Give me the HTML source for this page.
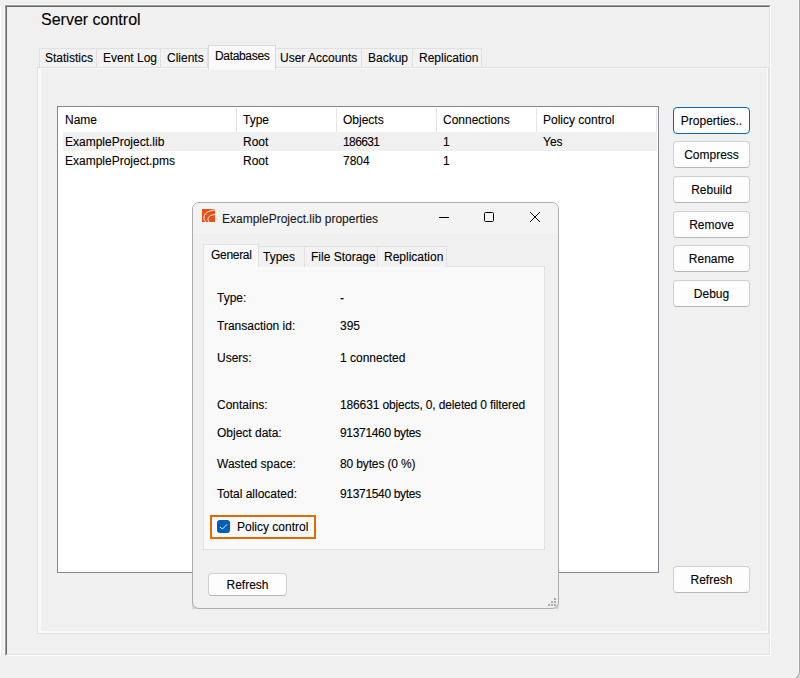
<!DOCTYPE html>
<html><head><meta charset="utf-8">
<style>
*{box-sizing:border-box;margin:0;padding:0}
html,body{width:800px;height:678px;overflow:hidden;background:#f0f0f0}
body{position:relative;font-family:"Liberation Sans",sans-serif;color:#000;-webkit-text-stroke:0.1px #000}
.a{position:absolute}
.t{position:absolute;font-size:12px;line-height:12px;white-space:nowrap;color:#000}
.tab{position:absolute;top:48px;height:19px;background:#f2f2f2;border:1px solid #e0e0e0;border-bottom:none}
.btn{position:absolute;left:673px;width:77px;height:27px;background:#fdfdfd;border:1px solid #d0d0d0;border-bottom-color:#b8b8b8;border-radius:4px}
.btn span{position:absolute;left:0;right:0;top:7px;text-align:center;font-size:12px;line-height:12px;white-space:nowrap}
.sep{position:absolute;top:108px;width:1px;height:24px;background:#e5e5e5}
.dtab{position:absolute;top:246px;height:21px;background:#f2f2f2;border:1px solid #e2e2e2;border-bottom:none}
</style></head><body>
<!-- right edge -->
<div class="a" style="left:798px;top:0;width:1px;height:668px;background:#f9f9f9"></div>
<div class="a" style="left:799px;top:0;width:1px;height:668px;background:#a4a4a4"></div>
<div class="a" style="left:788px;top:666px;width:12px;height:12px;background:#d4d4d4"></div>
<div class="a" style="left:770px;top:640px;width:30px;height:40px;background:#f0f0f0;border-right:1px solid #a4a4a4;border-bottom:1px solid #a4a4a4;border-bottom-right-radius:9px;box-shadow:inset -1px -1px 0 #f9f9f9"></div>
<!-- left white line -->
<div class="a" style="left:0;top:5px;width:1px;height:651px;background:#fff"></div>
<div class="a" style="left:4px;top:4px;width:767px;height:1px;background:#f7f7f7"></div>
<div class="a" style="left:4px;top:4px;width:1px;height:652px;background:#f7f7f7"></div>
<!-- sunken frame -->
<div class="a" style="left:5px;top:5px;width:766px;height:651px;border-top:1px solid #a0a0a0;border-left:1px solid #a0a0a0;border-right:1px solid #fff;border-bottom:1px solid #fff"></div>
<div class="a" style="left:6px;top:6px;width:764px;height:649px;border-top:1px solid #696969;border-left:1px solid #696969;border-right:1px solid #e3e3e3;border-bottom:1px solid #e3e3e3"></div>

<div class="a" style="left:41px;top:12px;font-size:16px;line-height:16px;white-space:nowrap">Server control</div>

<!-- tab panel -->
<div class="a" style="left:37px;top:67px;width:732px;height:567px;border:1px solid #e0e0e0;background:#f9f9f9"></div>
<div class="a" style="left:41px;top:69px;width:726px;height:562px;background:#f0f0f0"></div>

<!-- tabs -->
<div class="tab" style="left:39px;width:58px"></div>
<div class="tab" style="left:96px;width:65px"></div>
<div class="tab" style="left:160px;width:48px"></div>
<div class="tab" style="left:275px;width:87px"></div>
<div class="tab" style="left:361px;width:52px"></div>
<div class="tab" style="left:412px;width:70px"></div>
<div class="a" style="left:208px;top:45px;width:68px;height:25px;background:#f9f9f9;border:1px solid #dadada;border-bottom:none"></div>
<div class="t" style="left:45px;top:52px">Statistics</div>
<div class="t" style="left:103px;top:52px">Event Log</div>
<div class="t" style="left:167px;top:52px">Clients</div>
<div class="t" style="left:215px;top:50px;letter-spacing:-0.33px">Databases</div>
<div class="t" style="left:280px;top:52px">User Accounts</div>
<div class="t" style="left:368px;top:52px">Backup</div>
<div class="t" style="left:419px;top:52px">Replication</div>

<!-- list -->
<div class="a" style="left:57px;top:106px;width:602px;height:467px;background:#fff;border:1px solid #828790"></div>
<div class="sep" style="left:236px"></div>
<div class="sep" style="left:336px"></div>
<div class="sep" style="left:436px"></div>
<div class="sep" style="left:536px"></div>
<div class="sep" style="left:656px"></div>
<div class="a" style="left:63px;top:132px;width:594px;height:19px;background:#f0f0f0"></div>
<div class="t" style="left:65px;top:114px">Name</div>
<div class="t" style="left:243px;top:114px">Type</div>
<div class="t" style="left:343px;top:114px">Objects</div>
<div class="t" style="left:443px;top:114px">Connections</div>
<div class="t" style="left:543px;top:114px">Policy control</div>
<div class="t" style="left:65px;top:136px">ExampleProject.lib</div>
<div class="t" style="left:243px;top:136px">Root</div>
<div class="t" style="left:343px;top:136px;letter-spacing:-0.6px">186631</div>
<div class="t" style="left:443px;top:136px">1</div>
<div class="t" style="left:543px;top:136px">Yes</div>
<div class="t" style="left:65px;top:155px">ExampleProject.pms</div>
<div class="t" style="left:243px;top:155px">Root</div>
<div class="t" style="left:343px;top:155px">7804</div>
<div class="t" style="left:443px;top:155px">1</div>

<!-- buttons -->
<div class="btn" style="top:107px;border:1px solid #0067c0"><span>Properties..</span></div>
<div class="btn" style="top:141px"><span>Compress</span></div>
<div class="btn" style="top:176px"><span>Rebuild</span></div>
<div class="btn" style="top:211px"><span>Remove</span></div>
<div class="btn" style="top:245px"><span>Rename</span></div>
<div class="btn" style="top:280px"><span>Debug</span></div>
<div class="btn" style="top:566px"><span>Refresh</span></div>

<!-- dialog -->
<div class="a" style="left:192px;top:602px;width:6px;height:7px;background:#d6d6d6"></div>
<div class="a" style="left:553px;top:602px;width:6px;height:7px;background:#d6d6d6"></div>
<div class="a" style="left:192px;top:202px;width:367px;height:407px;border:1px solid #adadad;border-radius:7px;background:#f0f0f0;overflow:hidden">
  <div class="a" style="left:0;top:0;width:365px;height:30px;background:#f3f3f3"></div>
</div>

<!-- dialog content -->
<svg class="a" style="left:202px;top:209px" width="13" height="13" viewBox="0 0 13 13">
<rect width="13" height="13" fill="#ee5013"/>
<path d="M4 13.2 C0.2 9.5 0.9 2.2 13 0.9" fill="none" stroke="#fff" stroke-width="1"/>
<path d="M7.4 13.2 C4.4 10.5 5.8 6 13 5.5" fill="none" stroke="#fff" stroke-width="1"/>
</svg>
<div class="t" style="left:222px;top:213px;color:#1b1b1b">ExampleProject.lib properties</div>
<div class="a" style="left:439px;top:217px;width:10px;height:1px;background:#000"></div>
<div class="a" style="left:484px;top:212px;width:10px;height:10px;border:1px solid #000;border-radius:1.5px"></div>
<svg class="a" style="left:529px;top:211px" width="12" height="12" viewBox="0 0 12 12"><path d="M1 1 L11 11 M11 1 L1 11" stroke="#000" stroke-width="1"/></svg>

<div class="a" style="left:203px;top:266px;width:342px;height:284px;border:1px solid #e0e0e0;background:#f9f9f9"></div>
<div class="dtab" style="left:258px;width:47px"></div>
<div class="dtab" style="left:304px;width:74px"></div>
<div class="dtab" style="left:377px;width:70px"></div>
<div class="a" style="left:203px;top:244px;width:56px;height:23px;background:#f9f9f9;border:1px solid #e0e0e0;border-bottom:none"></div>
<div class="t" style="left:211px;top:249px;letter-spacing:-0.3px">General</div>
<div class="t" style="left:263px;top:251px">Types</div>
<div class="t" style="left:311px;top:251px">File Storage</div>
<div class="t" style="left:384px;top:251px">Replication</div>

<div class="t" style="left:217px;top:292px">Type:</div>
<div class="t" style="left:340px;top:292px">-</div>
<div class="t" style="left:217px;top:320px">Transaction id:</div>
<div class="t" style="left:340px;top:320px">395</div>
<div class="t" style="left:217px;top:352px">Users:</div>
<div class="t" style="left:340px;top:352px">1 connected</div>
<div class="t" style="left:217px;top:399px">Contains:</div>
<div class="t" style="left:340px;top:399px;letter-spacing:-0.14px">186631 objects, 0, deleted 0 filtered</div>
<div class="t" style="left:217px;top:427px">Object data:</div>
<div class="t" style="left:340px;top:427px;letter-spacing:-0.33px">91371460 bytes</div>
<div class="t" style="left:217px;top:458px">Wasted space:</div>
<div class="t" style="left:340px;top:458px;letter-spacing:-0.14px">80 bytes (0 %)</div>
<div class="t" style="left:217px;top:488px">Total allocated:</div>
<div class="t" style="left:340px;top:488px;letter-spacing:-0.33px">91371540 bytes</div>

<div class="a" style="left:210px;top:515px;width:106px;height:24px;border:2px solid #e06b00"></div>
<div class="a" style="left:217px;top:520px;width:13px;height:13px;background:#005fb8;border-radius:3px"></div>
<svg class="a" style="left:217px;top:520px" width="13" height="13" viewBox="0 0 13 13"><path d="M3 7 L5.5 9 L10 4.3" fill="none" stroke="#fff" stroke-width="0.9"/></svg>
<div class="t" style="left:237px;top:521px">Policy control</div>

<div class="btn" style="left:208px;top:573px;width:79px;height:23px"><span style="top:5px">Refresh</span></div>

<div class="a" style="left:554px;top:598px;width:2px;height:2px;background:#a8a8a8"></div>
<div class="a" style="left:551px;top:601px;width:2px;height:2px;background:#a8a8a8"></div>
<div class="a" style="left:554px;top:601px;width:2px;height:2px;background:#a8a8a8"></div>
<div class="a" style="left:548px;top:604px;width:2px;height:2px;background:#a8a8a8"></div>
<div class="a" style="left:551px;top:604px;width:2px;height:2px;background:#a8a8a8"></div>
<div class="a" style="left:554px;top:604px;width:2px;height:2px;background:#a8a8a8"></div>
</body></html>
